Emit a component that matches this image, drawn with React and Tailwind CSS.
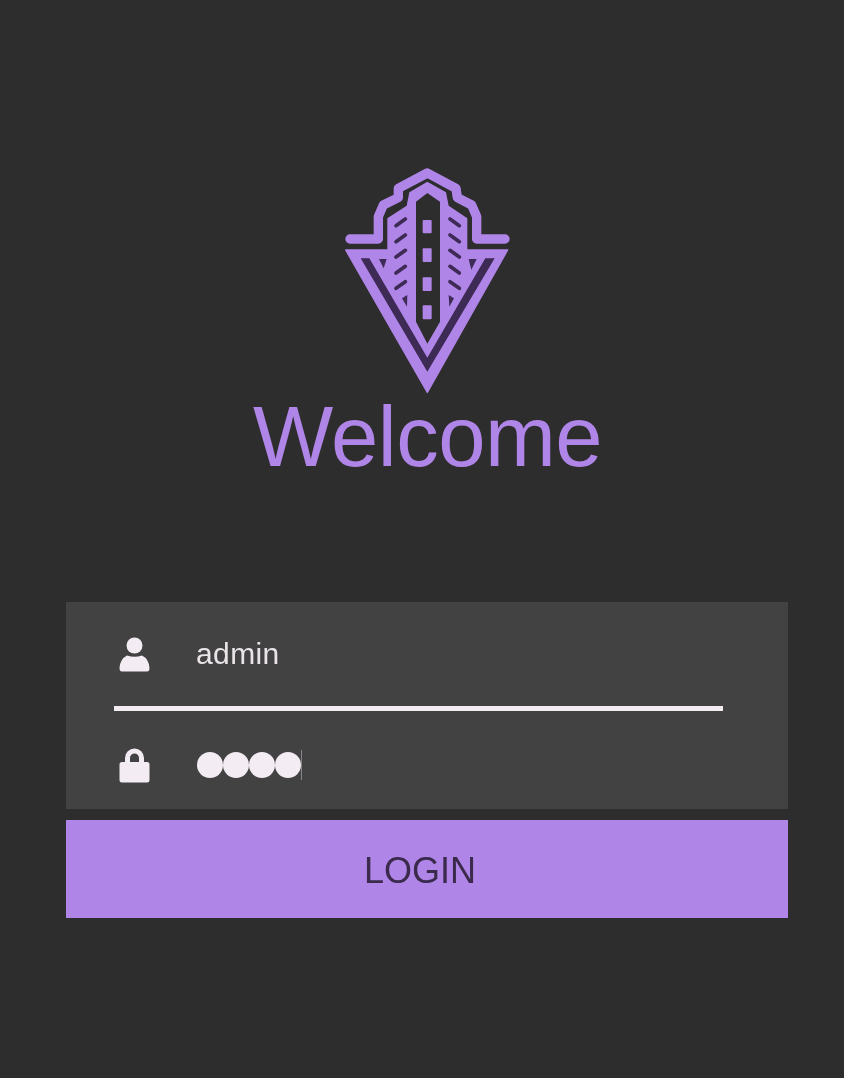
function Logo() {
  return (
    <svg viewBox="0 0 585 735" className="block h-[245px] w-[195px]">
      <polyline
        points="60,252 145,252 145,185 160,150 205,128 205,100 292,54 378,100 382,128 425,150 440,185 440,252 525,252"
        fill="none"
        stroke="#b085e8"
        strokeWidth="28"
        strokeLinejoin="round"
        strokeLinecap="round"
      />
      <polygon points="47,285 533,285 292,712" fill="#b085e8" stroke="#b085e8" strokeWidth="4" strokeLinejoin="round" />
      <polygon points="92,310 118,310 292,608 466,310 494,310 292,650" fill="#3d2a55" />
      <path
        d="M172 300 L172 190 L230 152 L238 112 L292 80 L348 112 L356 152 L412 190 L412 300 L292 560 Z"
        fill="#b085e8"
      />
      <path d="M258 140 L292 114 L330 140 L330 500 L292 566 L258 500 Z" fill="#2e2d2e" />
      <rect x="278" y="195" width="27" height="40" rx="3" fill="#b085e8" />
      <rect x="278" y="280" width="27" height="41" rx="3" fill="#b085e8" />
      <rect x="278" y="367" width="27" height="41" rx="3" fill="#b085e8" />
      <rect x="278" y="451" width="27" height="42" rx="3" fill="#b085e8" />
      <g stroke="#3d2a55" strokeWidth="11" strokeLinecap="round">
        <line x1="198" y1="212" x2="226" y2="192" />
        <line x1="198" y1="260" x2="226" y2="240" />
        <line x1="198" y1="306" x2="226" y2="286" />
        <line x1="198" y1="354" x2="226" y2="334" />
        <line x1="198" y1="400" x2="226" y2="380" />
        <line x1="360" y1="192" x2="388" y2="212" />
        <line x1="360" y1="240" x2="388" y2="260" />
        <line x1="360" y1="286" x2="388" y2="306" />
        <line x1="360" y1="334" x2="388" y2="354" />
        <line x1="360" y1="380" x2="388" y2="400" />
      </g>
      <g fill="#3d2a55">
        <polygon points="147,312 170,312 161,340" />
        <polygon points="416,312 440,312 424,344" />
        <polygon points="216,430 232,420 231,455" />
        <polygon points="356,420 372,430 358,455" />
      </g>
    </svg>
  );
}

function UserIcon() {
  return (
    <svg viewBox="0 0 31 35" className="block h-[35px] w-[31px]" fill="#f3ecf3">
      <circle cx="15.5" cy="8.5" r="8" />
      <path d="M.5 31 Q.5 34.500 3 34.500 L28 34.500 Q30.500 34.500 30.500 31 Q30 22 23 18.500 Q15.500 21 8 18.500 Q1 22 .5 31 Z" />
    </svg>
  );
}

function LockIcon() {
  return (
    <svg viewBox="0 0 31 35" className="block h-[35px] w-[31px]" fill="#f3ecf3">
      <path
        fillRule="evenodd"
        d="M6 14 L6 10 A9.500 9.500 0 0 1 25 10 L25 14 L28 14 Q30.500 14 30.500 16.500 L30.500 32 Q30.500 34.500 28 34.500 L3 34.500 Q.5 34.500 .5 32 L.5 16.500 Q.5 14 3 14 Z M11 14 L20 14 L20 10 A4.500 4.500 0 0 0 11 10 Z"
      />
    </svg>
  );
}

export default function App() {
  return (
    <div className="h-[1078px] overflow-hidden bg-[#2e2d2e] pt-[155px] font-['Liberation_Sans',Arial,sans-serif]">
      <div className="blur-[0.5px]">
        <div className="flex flex-col items-center pl-[11px]">
          <Logo />
          <h1 className="-mt-[13px] text-[85px] leading-[100px] font-normal tracking-[-0.5px] text-[#b085e8]">Welcome</h1>
        </div>

        <form className="mt-[115px] ml-[66px] w-[722px]">
          <div className="bg-[#434243] pl-[48px]">
            <div className="flex h-[104px] items-center pl-[5px]">
              <UserIcon />
              <span className="ml-[46px] text-[30px] leading-none tracking-[0.4px] text-[#e8e4e8]">admin</span>
            </div>
            <div className="h-[5px] w-[609px] bg-[#f3ecf3]"></div>
            <div className="flex h-[98px] items-center pt-[10px] pl-[5px]">
              <LockIcon />
              <div className="ml-[47px] flex items-center">
                <span className="h-[26px] w-[26px] rounded-full bg-[#f3ecf3]"></span>
                <span className="h-[26px] w-[26px] rounded-full bg-[#f3ecf3]"></span>
                <span className="h-[26px] w-[26px] rounded-full bg-[#f3ecf3]"></span>
                <span className="h-[26px] w-[26px] rounded-full bg-[#f3ecf3]"></span>
                <span className="h-[30px] w-[1px] bg-[#8a858a]"></span>
              </div>
            </div>
          </div>
          <button type="button" className="mt-[11px] block h-[98px] w-full bg-[#b085e8] pt-[4px] pr-[14px] text-[36px] text-[#3a2a4c]">
            LOGIN
          </button>
        </form>
      </div>
    </div>
  );
}
